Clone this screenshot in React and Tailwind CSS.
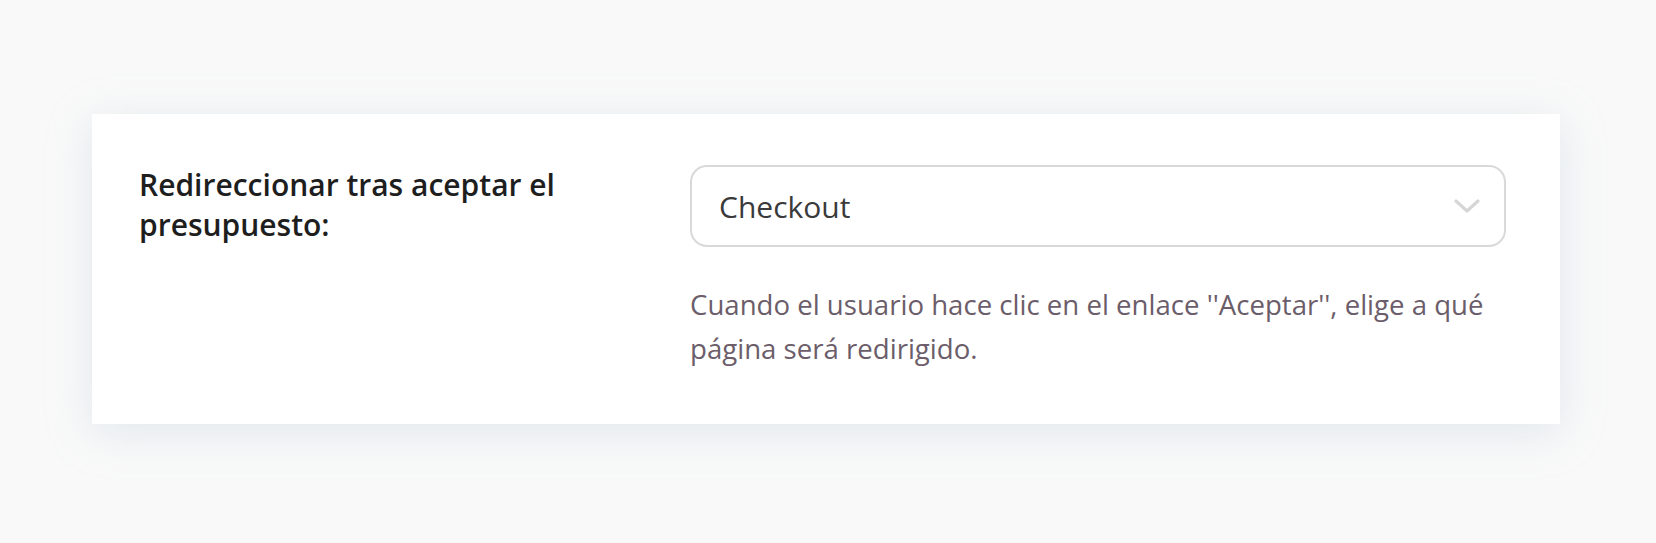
function Chevron() {
  return (
    <svg width="26" height="14" viewBox="0 0 26 14" fill="none" className="shrink-0">
      <path d="M2 2l11 10L24 2" stroke="#d6d6d6" strokeWidth="3.2" strokeLinecap="round" strokeLinejoin="round" />
    </svg>
  );
}

export default function App() {
  return (
    <div className="min-h-[543px] bg-[#f9f9f9] pt-[114px] pl-[92px] pr-[96px] font-['Open_Sans',sans-serif]">
      <div className="flex bg-white shadow-[0_8px_40px_rgba(180,200,215,0.35)] pl-[47px] pr-[54px] pt-[51px] pb-[54px]">
        <div className="w-[551px] shrink-0">
          <p className="text-[30px] font-semibold leading-[40px] text-[#1e1e1e] w-[480px]">
            Redireccionar tras aceptar el presupuesto:
          </p>
        </div>
        <div className="flex-1">
          <div className="flex h-[82px] items-center justify-between rounded-[17px] border-2 border-[#d9d9d9] pl-[27px] pr-[24px]">
            <span className="text-[30px] text-[#3a3a3a]">Checkout</span>
            <Chevron />
          </div>
          <p className="mt-[35px] text-[27.6px] leading-[44px] text-[#6b5d69]">
            Cuando el usuario hace clic en el enlace ''Aceptar'', elige a qué página será redirigido.
          </p>
        </div>
      </div>
    </div>
  );
}
